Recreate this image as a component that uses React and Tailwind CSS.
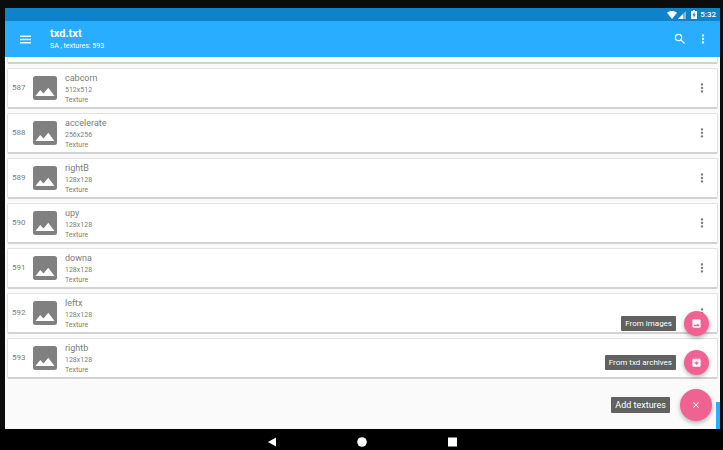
import {
  MdArchive,
  MdClose,
  MdImage,
  MdMoreVert,
  MdSearch,
} from 'react-icons/md';

const textures = [
  { id: 587, name: 'cabcorn', size: '512x512' },
  { id: 588, name: 'accelerate', size: '256x256' },
  { id: 589, name: 'rightB', size: '128x128' },
  { id: 590, name: 'upy', size: '128x128' },
  { id: 591, name: 'downa', size: '128x128' },
  { id: 592, name: 'leftx', size: '128x128' },
  { id: 593, name: 'rightb', size: '128x128' },
];

function StatusBar() {
  return (
    <div className="flex h-[13px] shrink-0 items-center justify-end bg-[#0f82cc] pr-1 text-white">
      <svg viewBox="0 0 10 8" className="h-2 w-[10px]" fill="currentColor">
        <path d="M0 1.8C2.8-.5 7.2-.5 10 1.8L5 8z" />
      </svg>
      <svg viewBox="0 0 8 8" className="ml-px h-2 w-2" fill="currentColor">
        <path d="M8 0v8H0z" opacity=".45" />
        <path d="M5 3v5H0z" />
      </svg>
      <svg viewBox="0 0 6 9" className="ml-[5px] h-[9px] w-[6px]">
        <path d="M2 0h2v1h1.5q.5 0 .5.5v7q0 .5-.5.5h-5Q0 9 0 8.500v-7Q0 1 .5 1H2z" fill="#fff" />
        <path d="M3.500 2L1.500 5.300h1.200V8l2-3.400H3.500z" fill="#0f82cc" />
      </svg>
      <span className="ml-[3px] text-[8px] leading-none font-medium">5:32</span>
    </div>
  );
}

function Toolbar() {
  return (
    <header className="flex h-9 shrink-0 items-center bg-[#29adff] pl-[15px] text-white">
      <button type="button" aria-label="Menu">
        <svg viewBox="0 0 11 9" className="h-[9px] w-[11px]" fill="currentColor" opacity=".9">
          <path d="M0 .5h11V2H0zM0 3.800h11v1.500H0zM0 7h11v1.500H0z" />
        </svg>
      </button>
      <div className="ml-[19px] flex-1">
        <h1 className="text-[11px] leading-[14px] font-bold">txd.txt</h1>
        <p className="text-[7px] leading-[10px]">SA , textures: 593</p>
      </div>
      <button type="button" aria-label="Search">
        <MdSearch className="size-[14px]" />
      </button>
      <button type="button" aria-label="More options" className="mr-[10px] ml-[9px]">
        <MdMoreVert className="size-[14px]" />
      </button>
    </header>
  );
}

function TextureIcon() {
  return (
    <svg viewBox="0 0 24 24" className="size-6 shrink-0">
      <rect width="24" height="24" rx="2.5" fill="#808080" />
      <path d="M2.500 20l4.700-6 3.300 3.600 4.800-5.800L21.500 20z" fill="#fff" />
    </svg>
  );
}

function TextureRow({ texture }) {
  return (
    <li className="flex h-[41px] items-center rounded-[2px] border border-b-2 border-[#e2e2e2] border-b-[#d2d2d2] bg-white text-[#7c7c7c]">
      <span className="w-[25px] shrink-0 pl-1 text-[8px] leading-none">{texture.id}</span>
      <TextureIcon />
      <div className="ml-2 flex-1">
        <div className="text-[9px] leading-3">{texture.name}</div>
        <div className="mt-px text-[7px] leading-[10px]">
          <div>{texture.size}</div>
          <div>Texture</div>
        </div>
      </div>
      <button type="button" aria-label={`Options for ${texture.name}`} className="mr-2">
        <MdMoreVert className="size-[14px]" />
      </button>
    </li>
  );
}

function FabAction({ label, children }) {
  return (
    <button type="button" className="flex items-center gap-2 text-white">
      <span className="rounded-[1px] bg-[#616161] px-1 text-[8px] leading-[15px]">{label}</span>
      <span className="flex size-[25px] items-center justify-center rounded-full bg-[#f06292] shadow-[0_2px_4px_rgba(0,0,0,0.3)]">
        {children}
      </span>
    </button>
  );
}

function NavigationBar() {
  return (
    <nav className="flex h-[21px] shrink-0 items-center justify-center gap-20 bg-black pt-1 text-white">
      <button type="button" aria-label="Back">
        <svg viewBox="0 0 10 10" className="size-[10px]" fill="currentColor">
          <path d="M9 .5v9L1 5z" />
        </svg>
      </button>
      <button type="button" aria-label="Home">
        <svg viewBox="0 0 10 10" className="size-[10px]" fill="currentColor">
          <circle cx="5" cy="5" r="4.800" />
        </svg>
      </button>
      <button type="button" aria-label="Recent apps">
        <svg viewBox="0 0 10 10" className="size-[10px]" fill="currentColor">
          <rect x="1" y=".5" width="9" height="9" />
        </svg>
      </button>
    </nav>
  );
}

export default function App() {
  return (
    <div className="flex h-screen flex-col bg-[#0c0c0c] pt-2 font-['Roboto',sans-serif]">
      <div className="mr-[3px] ml-[5px] flex min-h-0 flex-1 flex-col">
        <StatusBar />
        <Toolbar />

        <main className="relative flex min-h-0 flex-1 flex-col justify-end overflow-hidden bg-[#fafafa]">
          <ul className="flex flex-col gap-1 px-[2px] pb-[50px]">
            {/* Tail of the row that is scrolled under the toolbar */}
            <li className="flex h-4 items-end rounded-[2px] border border-b-2 border-[#e2e2e2] border-b-[#d2d2d2] bg-white pb-[2px] pl-[57px] text-[7px] leading-[10px] text-[#7c7c7c]">
              Texture
            </li>
            {textures.map((texture) => (
              <TextureRow key={texture.id} texture={texture} />
            ))}
          </ul>

          {/* Scroll thumb */}
          <div className="absolute right-0 bottom-0 h-[27px] w-1 bg-[#29adff]" />

          {/* Floating menu */}
          <div className="absolute right-2 bottom-2 flex flex-col items-end">
            <div className="mr-[3px] flex flex-col items-end gap-[14px]">
              <FabAction label="From images">
                <MdImage className="size-[11px]" />
              </FabAction>
              <FabAction label="From txd archives">
                <MdArchive className="size-[11px]" />
              </FabAction>
            </div>
            <button type="button" className="mt-[14px] flex items-center gap-[10px] text-white">
              <span className="rounded-[1px] bg-[#616161] px-1 text-[9px] leading-4">Add textures</span>
              <span className="flex size-8 items-center justify-center rounded-full bg-[#f06292] shadow-[0_2px_4px_rgba(0,0,0,0.3)]">
                <MdClose className="size-[10px]" />
              </span>
            </button>
          </div>
        </main>
      </div>
      <NavigationBar />
    </div>
  );
}
